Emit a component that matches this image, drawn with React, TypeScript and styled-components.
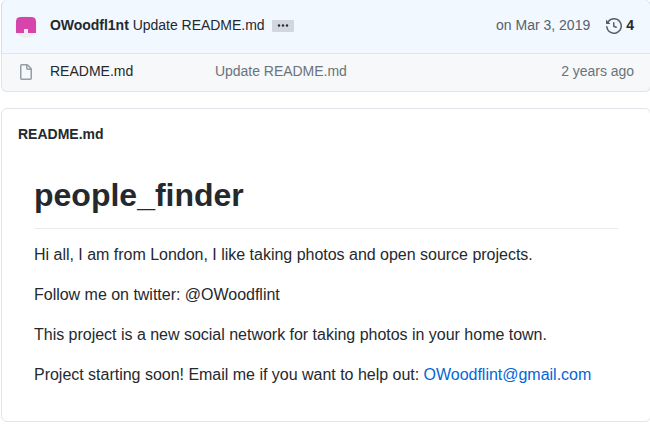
import React from 'react';
import styled, { createGlobalStyle } from 'styled-components';

const GlobalStyle = createGlobalStyle`
  * { box-sizing: border-box; }
  body { margin: 0; background: #fff; color: #24292e; font: 14px/21px "Liberation Sans", Arial, sans-serif; overflow: hidden; }
`;
const Page = styled.main`width: 651px; height: 426px; padding-left: 1px; overflow: hidden;`;
const Files = styled.section`height: 92px; border: 1px solid #e1e4e8; border-top: 0; border-radius: 6px; background: #f6f8fa;`;
const Commit = styled.header`display: flex; align-items: center; height: 54px; margin: 0 -1px; padding: 0 16px 3px 13px; background: #f1f8ff; border: 1px solid #c8e1ff; border-top: 0; border-bottom-color: #e1e4e8; border-radius: 6px 6px 0 0;`;
const Avatar = styled.svg`display: block; margin-top: 3px;`;
const Author = styled.strong`margin-left: 13px; letter-spacing: -.03px;`;
const Message = styled.span`margin-left: 4px; letter-spacing: -.03px;`;
const More = styled.button`display: flex; align-items: center; justify-content: center; width: 22px; height: 12px; margin: 2px 0 0 7px; padding: 0 0 2px; border: 0; border-radius: 1px; background: #d1d7df; color: #24292e;`;
const CommitDate = styled.time`margin-left: auto; color: #586069;`;
const History = styled.div`display: flex; align-items: center; margin-left: 16px; gap: 4px; font-weight: 700; svg { margin-top: 1px; }`;
const FileRow = styled.div`display: grid; grid-template-columns: 32px 165px 1fr auto; align-items: center; height: 37px; padding: 0 16px 2px; border-radius: 0 0 5px 5px;`;
const Muted = styled.span`color: #6a737d; letter-spacing: -.03px;`;
const Readme = styled.article`height: 314px; margin-top: 16px; border: 1px solid #e1e4e8; border-radius: 6px;`;
const ReadmeLabel = styled.h2`margin: 15px 16px 0; font-size: 14px; line-height: 21px;`;
const Content = styled.div`padding: 30px 32px 0; font-size: 16px; line-height: 24px;`;
const Title = styled.h1`margin: 0 0 14px; padding-bottom: 13px; border-bottom: 1px solid #eaecef; font-size: 32px; line-height: 40px;`;
const Paragraph = styled.p`margin: 0 0 16px; letter-spacing: -.015px;`;
const Email = styled.a`color: #0366d6; text-decoration: none;`;

export default function App() {
  return <><GlobalStyle /><Page>
    <Files>
      <Commit>
        <Avatar width="22" height="23" viewBox="0 0 22 23">
          <circle cx="11" cy="12" r="11" fill="#eee" />
          <path d="M5 2h12l3 1 1 3v12h-8v-4H9v4H1V6l1-3z" fill="#d744ac" />
        </Avatar>
        <Author>OWoodfl1nt</Author><Message>Update README.md</Message>
        <More aria-label="Show commit message"><svg width="12" height="3" viewBox="0 0 12 3" fill="currentColor"><circle cx="2" cy="1.5" r="1.2" /><circle cx="6" cy="1.5" r="1.2" /><circle cx="10" cy="1.5" r="1.2" /></svg></More>
        <CommitDate>on Mar 3, 2019</CommitDate>
        <History><svg width="16" height="16" viewBox="0 0 16 16" fill="#586069"><path fillRule="evenodd" d="M1.643 3.143L.427 1.927A.25.25 0 000 2.104V5.75c0 .138.112.25.25.25h3.646a.25.25 0 00.177-.427L2.715 4.215a6.5 6.5 0 11-1.18 4.458.75.75 0 10-1.493.154 8.001 8.001 0 101.6-5.684zM7.75 4a.75.75 0 01.75.75v2.992l2.028.812a.75.75 0 01-.557 1.392l-2.5-1A.75.75 0 017 8.25v-3.5A.75.75 0 017.75 4z" /></svg>4</History>
      </Commit>
      <FileRow>
        <svg width="16" height="16" viewBox="0 0 16 16" fill="#959da5"><path fillRule="evenodd" d="M3.75 1.5a.25.25 0 00-.25.25v12.5c0 .138.112.25.25.25h8.5a.25.25 0 00.25-.25V6H9.75A1.75 1.75 0 018 4.25V1.5H3.75zm5.75.56v2.19c0 .138.112.25.25.25h2.19L9.5 2.06zM2 1.75C2 .784 2.784 0 3.75 0h5.086c.464 0 .909.184 1.237.513l3.414 3.414c.329.328.513.773.513 1.237v9.086A1.75 1.75 0 0112.25 16h-8.5A1.75 1.75 0 012 14.25V1.75z" /></svg>
        <span>README.md</span><Muted>Update README.md</Muted><Muted>2 years ago</Muted>
      </FileRow>
    </Files>
    <Readme><ReadmeLabel>README.md</ReadmeLabel><Content>
      <Title>people_finder</Title>
      <Paragraph>Hi all, I am from London, I like taking photos and open source projects.</Paragraph>
      <Paragraph>Follow me on twitter: @OWoodflint</Paragraph>
      <Paragraph>This project is a new social network for taking photos in your home town.</Paragraph>
      <Paragraph>Project starting soon! Email me if you want to help out: <Email href="mailto:OWoodflint@gmail.com">OWoodflint@gmail.com</Email></Paragraph>
    </Content></Readme>
  </Page></>;
}
